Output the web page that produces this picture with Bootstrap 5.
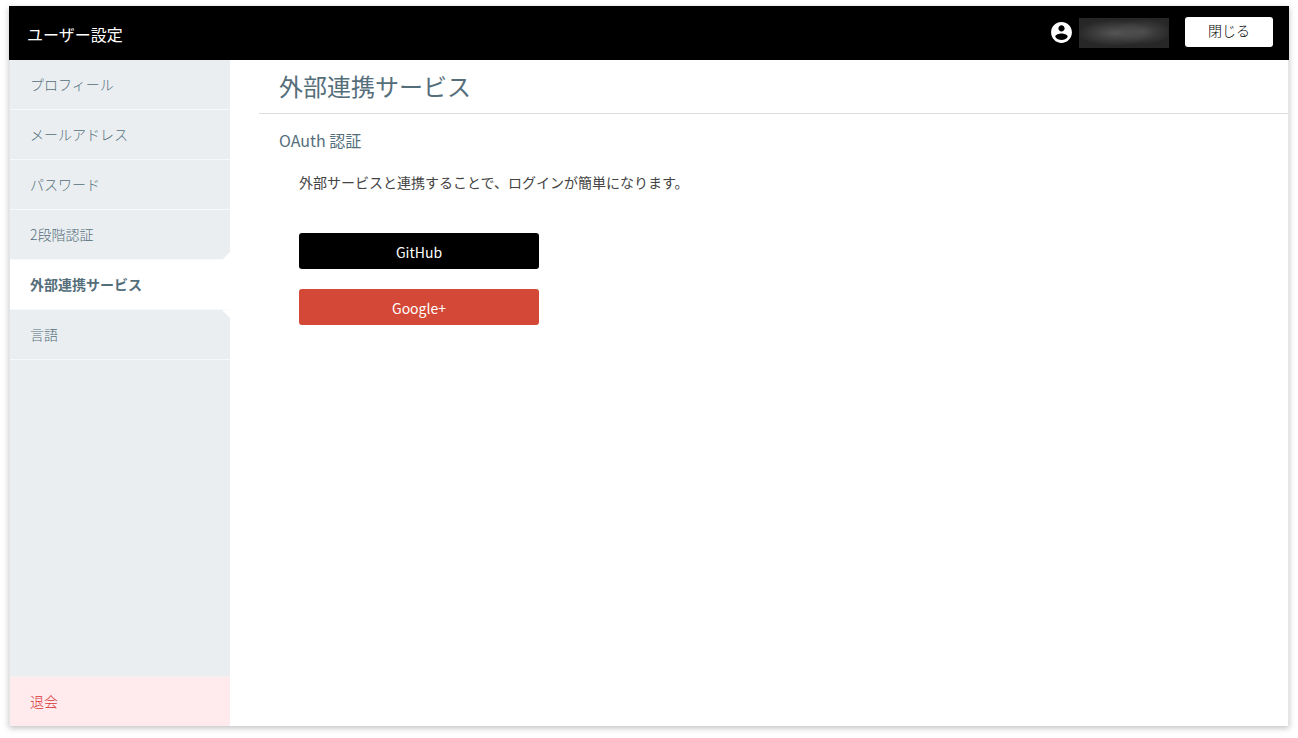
<!DOCTYPE html>
<html lang="ja">
<head>
<meta charset="utf-8">
<meta name="viewport" content="width=device-width, initial-scale=1">
<title>ユーザー設定</title>
<link href="https://cdn.jsdelivr.net/npm/bootstrap@5.3.0/dist/css/bootstrap.min.css" rel="stylesheet">
<style>
  body {
    font-family: "Noto Sans CJK JP", "Noto Sans", sans-serif;
    font-size: 14px;
    line-height: 20px;
    color: #444;
    padding: 6px 9px 12px;
  }
  .panel { box-shadow: 0 2px 6px rgba(0, 0, 0, .25); }
  .topbar { height: 54px; padding: 0 16px 0 18px; }
  .topbar-title { font-size: 16px; line-height: 24px; font-weight: 400; padding-top: 2px; }
  .user-tools { padding-bottom: 2px; }
  .user-icon { width: 25px; height: 25px; }
  .user-name {
    width: 90px;
    height: 30px;
    margin: 2px 16px 0 5px;
    background:
      radial-gradient(ellipse 38px 13px at 40% 50%, rgba(90, 90, 90, .9), transparent),
      radial-gradient(ellipse 30px 13px at 70% 46%, rgba(90, 90, 90, .7), transparent),
      #272727;
  }
  .btn-close-panel {
    --bs-btn-bg: #fff;
    --bs-btn-color: #000;
    --bs-btn-hover-bg: #eceff1;
    --bs-btn-border-width: 0;
    --bs-btn-font-size: 14px;
    --bs-btn-font-weight: 300;
    --bs-btn-border-radius: 3px;
    width: 88px;
    height: 30px;
    line-height: 20px;
    padding: 3px 0 7px;
  }
  .frame { border: solid #e4e6e7; border-width: 0 1px; }
  .sidebar { width: 220px; }
  .side-link {
    height: 50px;
    padding: 14px 20px 15px;
    background: #eaeef1;
    border-bottom: 1px solid #f6f8f9;
    color: #546e7a;
    font-weight: 300;
    text-decoration: none;
  }
  .side-link.active { background: #fff; border-color: #f6f8f9; color: #546e7a; font-weight: 700; }
  .before-active { clip-path: polygon(0 0, 100% 0, 100% calc(100% - 8px), calc(100% - 8px) 100%, 0 100%); }
  .after-active { clip-path: polygon(0 0, calc(100% - 8px) 0, 100% 8px, 100% 100%, 0 100%); }
  .side-space { background: #eaeef1; }
  .side-link.leave { background: #ffebee; color: #d93636; border-bottom: 0; border-top: 1px solid #f4f0f2; }
  .content { margin-left: 29px; }
  .content-title {
    font-size: 24px;
    line-height: 36px;
    font-weight: 400;
    color: #546e7a;
    padding: 8px 20px 9px;
    border-bottom: 1px solid #ddd;
  }
  .section-title { font-size: 16px; line-height: 24px; font-weight: 400; color: #546e7a; }
  .section-block { padding: 14px 20px; }
  .section-body { padding: 20px; }
  .lead-in { margin-bottom: 41px; }
  .btn-service {
    --bs-btn-color: #fff;
    --bs-btn-hover-color: #fff;
    --bs-btn-font-size: 14px;
    --bs-btn-font-weight: 400;
    --bs-btn-border-radius: 3px;
    --bs-btn-border-width: 0;
    width: 240px;
    height: 36px;
    line-height: 20px;
    padding: 9px 0 7px;
  }
  .service-list { gap: 20px; }
  .btn-github { --bs-btn-bg: #000; --bs-btn-hover-bg: #222; }
  .btn-google { --bs-btn-bg: #d34836; --bs-btn-hover-bg: #bd3f2f; }
</style>
</head>
<body class="bg-white min-vh-100 d-flex flex-column">
<div class="panel bg-white flex-grow-1 d-flex flex-column">
  <header class="topbar bg-black text-white d-flex align-items-center justify-content-between">
    <h1 class="topbar-title mb-0">ユーザー設定</h1>
    <div class="user-tools d-flex align-items-center">
      <svg class="user-icon" viewBox="0 0 24 24" fill="#fff" aria-hidden="true"><path d="M12 2C6.480 2 2 6.480 2 12s4.480 10 10 10 10-4.480 10-10S17.520 2 12 2zm0 3c1.660 0 3 1.340 3 3s-1.340 3-3 3-3-1.340-3-3 1.340-3 3-3zm0 14.200c-2.500 0-4.710-1.280-6-3.220.030-1.990 4-3.080 6-3.080 1.990 0 5.970 1.090 6 3.080-1.290 1.940-3.500 3.220-6 3.220z"/></svg>
      <span class="user-name"></span>
      <button type="button" class="btn btn-close-panel">閉じる</button>
    </div>
  </header>
  <div class="frame flex-grow-1 d-flex">
    <nav class="sidebar flex-shrink-0 d-flex flex-column">
      <a class="side-link" href="#profile">プロフィール</a>
      <a class="side-link" href="#mail">メールアドレス</a>
      <a class="side-link" href="#password">パスワード</a>
      <a class="side-link before-active" href="#two-step">2段階認証</a>
      <a class="side-link active" href="#services" aria-current="page">外部連携サービス</a>
      <a class="side-link after-active" href="#language">言語</a>
      <div class="side-space flex-grow-1"></div>
      <a class="side-link leave" href="#leave">退会</a>
    </nav>
    <main class="content flex-grow-1">
      <h2 class="content-title mb-0">外部連携サービス</h2>
      <section class="section-block">
        <h3 class="section-title mb-0">OAuth 認証</h3>
        <div class="section-body">
          <p class="lead-in">外部サービスと連携することで、ログインが簡単になります。</p>
          <div class="service-list d-flex flex-column align-items-start">
            <button type="button" class="btn btn-service btn-github">GitHub</button>
            <button type="button" class="btn btn-service btn-google">Google+</button>
          </div>
        </div>
      </section>
    </main>
  </div>
</div>
<script src="https://cdn.jsdelivr.net/npm/bootstrap@5.3.0/dist/js/bootstrap.bundle.min.js"></script>
</body>
</html>
